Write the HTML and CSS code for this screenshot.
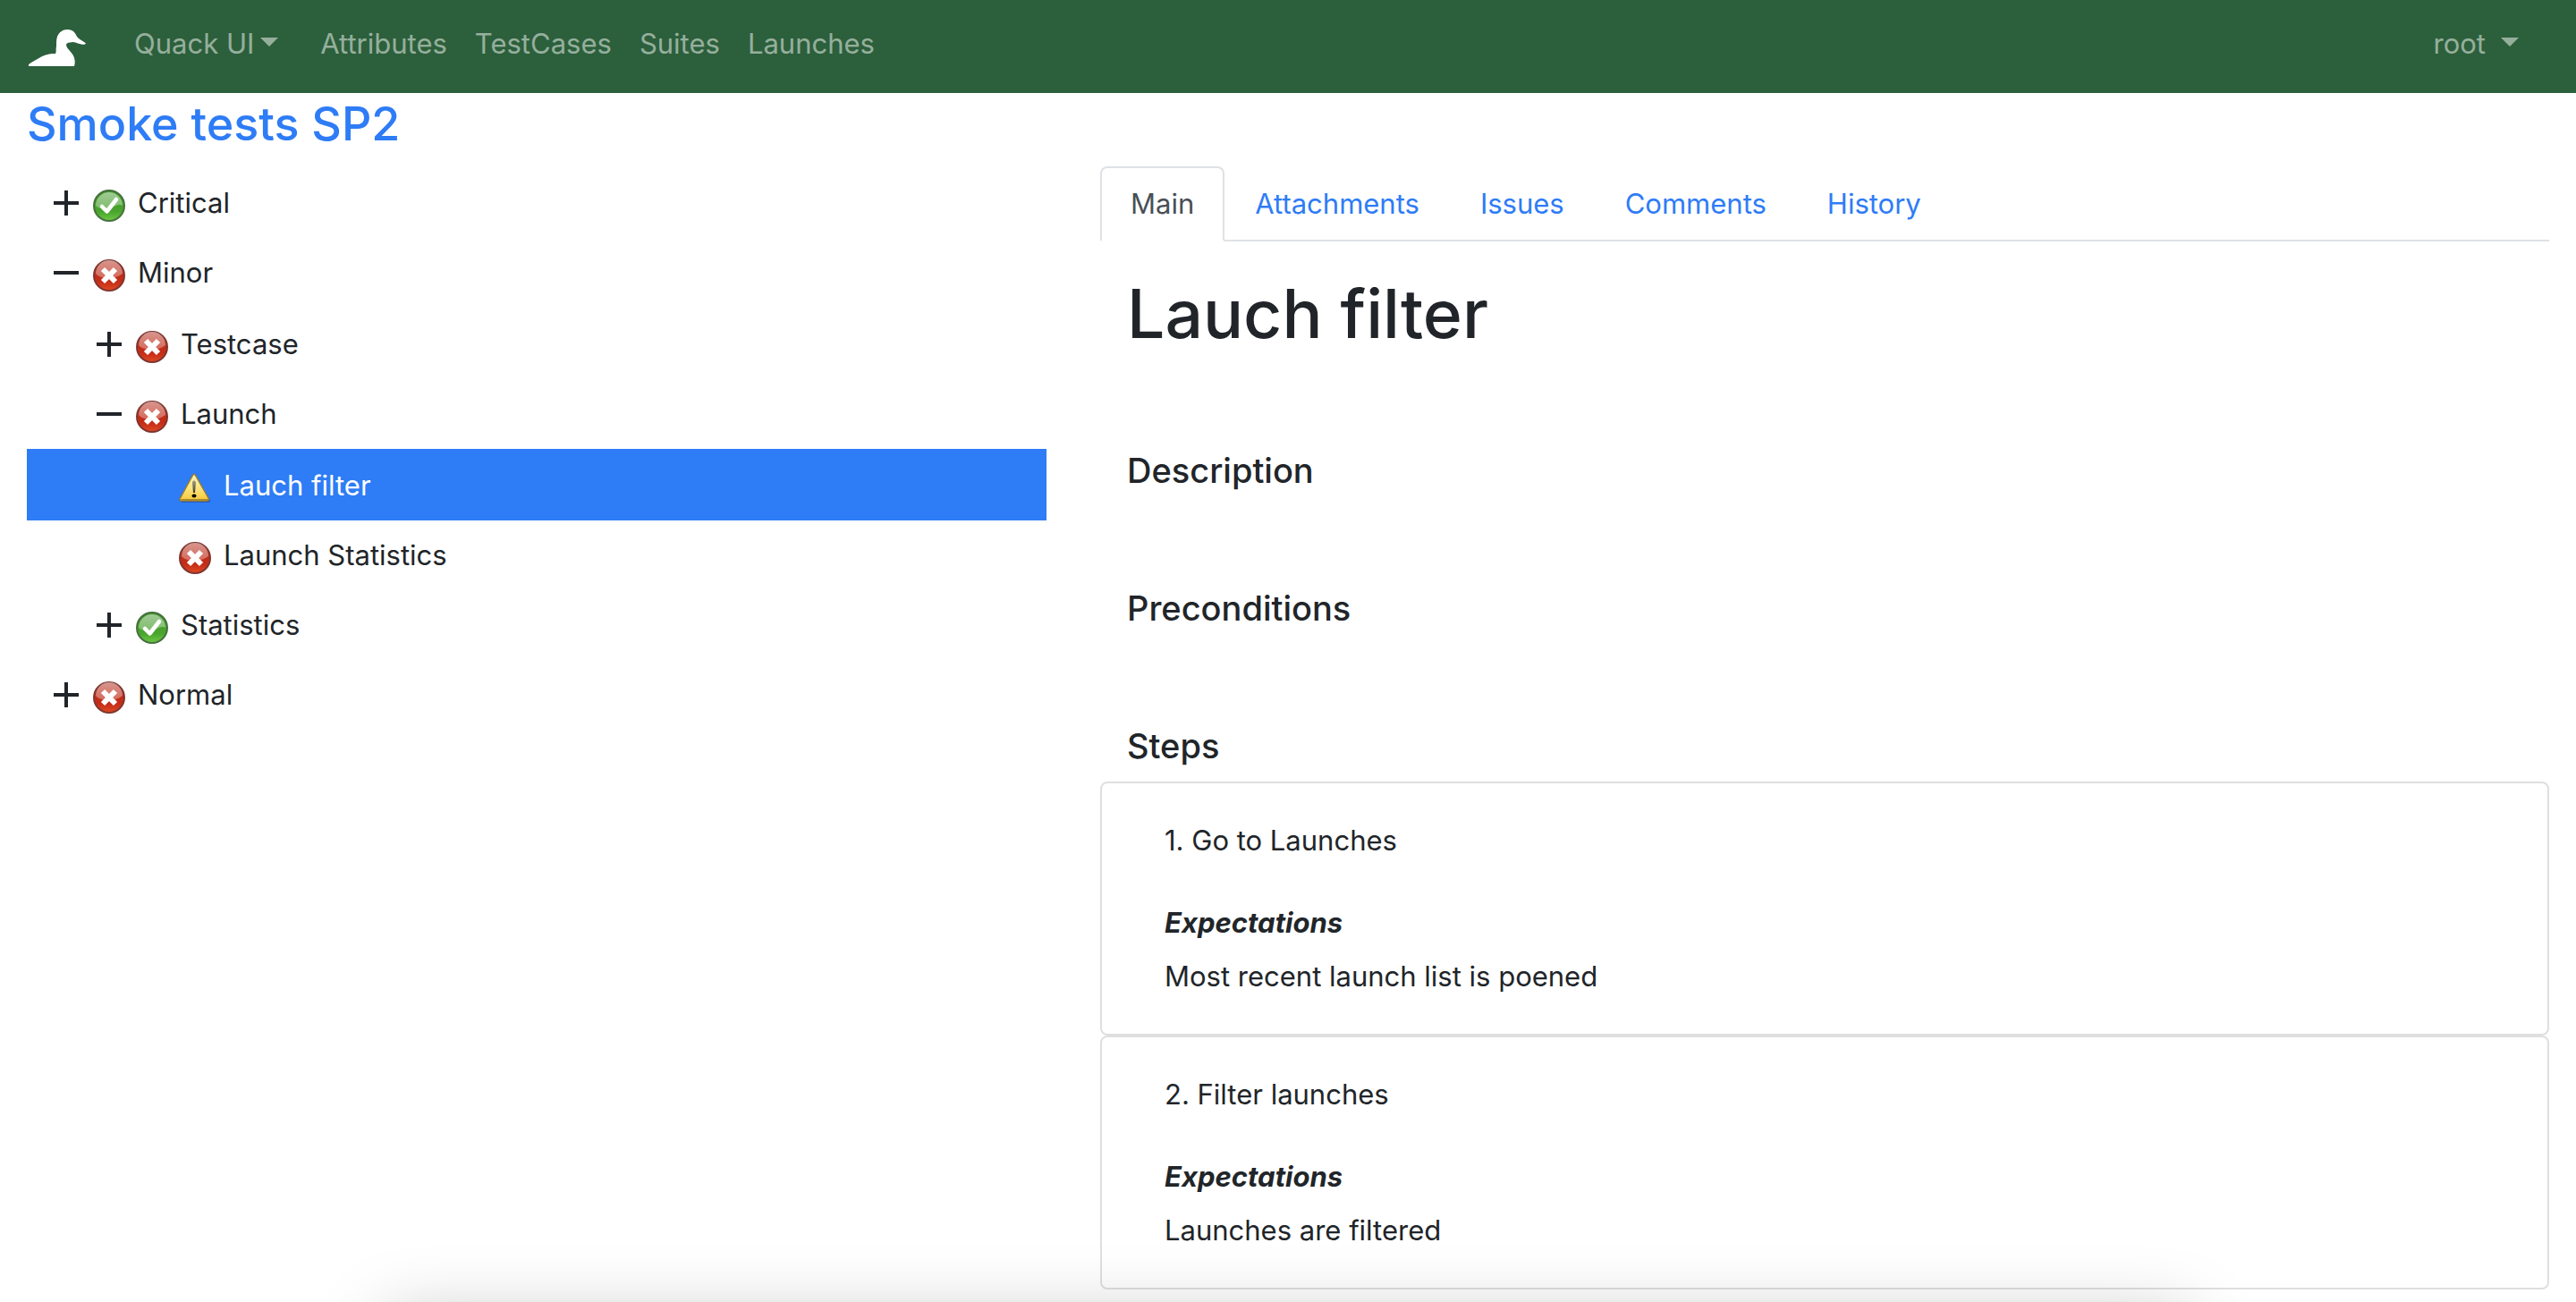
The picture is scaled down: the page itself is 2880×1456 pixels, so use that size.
FILE: index.html
```html
<!DOCTYPE html>
<html lang="en">
<head>
<meta charset="utf-8">
<meta name="viewport" content="width=device-width, initial-scale=1">
<title>Quack UI</title>
<link rel="stylesheet" href="styles.css">
</head>
<body>
<svg class="sprite" aria-hidden="true">
  <defs>
    <linearGradient id="green" x1="0" y1="0" x2="0" y2="1">
      <stop offset="0" stop-color="#3f9528"/><stop offset=".7" stop-color="#4aa52f"/><stop offset="1" stop-color="#6fc944"/>
    </linearGradient>
    <linearGradient id="red" x1="0" y1="0" x2="0" y2="1">
      <stop offset="0" stop-color="#b52a1a"/><stop offset=".7" stop-color="#c42d18"/><stop offset="1" stop-color="#e04a22"/>
    </linearGradient>
    <linearGradient id="gloss" x1="0" y1="0" x2="0" y2="1">
      <stop offset="0" stop-color="#fff" stop-opacity=".5"/><stop offset="1" stop-color="#fff" stop-opacity=".3"/>
    </linearGradient>
    <linearGradient id="yellow" x1="0" y1="0" x2="0" y2="1">
      <stop offset="0" stop-color="#fdf3b8"/><stop offset=".55" stop-color="#fbe27c"/><stop offset="1" stop-color="#f5c838"/>
    </linearGradient>
    <linearGradient id="mark" x1="0" y1="0" x2="0" y2="1">
      <stop offset="0" stop-color="#a39f85"/><stop offset="1" stop-color="#3c3a30"/>
    </linearGradient>
  </defs>
  <symbol id="passed" viewBox="0 0 36 36">
    <circle cx="18" cy="18" r="17" fill="url(#green)" stroke="#47703f" stroke-width="2"/>
    <path d="M3 18A15 15 0 0 1 33 18C28 15 23 20 18 21C12 22 6 21 3 18Z" fill="url(#gloss)"/>
    <path d="M10 19L15.500 24.500L26 11" fill="none" stroke="#fff" stroke-width="4.500" stroke-linecap="round" stroke-linejoin="round"/>
  </symbol>
  <symbol id="failed" viewBox="0 0 36 36">
    <circle cx="18" cy="18" r="17" fill="url(#red)" stroke="#803630" stroke-width="2"/>
    <path d="M3 16A15 15 0 0 1 33 16C28 20 22 21 18 21C12 21 6 20 3 16Z" fill="url(#gloss)"/>
    <path d="M11 11L25 25M25 11L11 25" stroke="#fff" stroke-width="6"/>
  </symbol>
  <symbol id="broken" viewBox="0 0 36 36">
    <path d="M18 4L35 32Q35 34 32 34H4Q2 34 3 32Z" fill="#1b3f7c" opacity=".45"/>
    <path d="M15.500 3.500Q17 1 18.500 3.500L33 29Q34 32 31 32H3Q0 32 1.500 29Z" fill="url(#yellow)" stroke="#9a7a2a" stroke-width="1.500" stroke-linejoin="round"/>
    <path d="M2.500 30.500H32" stroke="#a8862a" stroke-width="1"/>
    <path d="M15 11Q17 7.500 19 11L18 23H16Z" fill="url(#mark)"/>
    <ellipse cx="17" cy="26.500" rx="2.500" ry="2" fill="#000"/>
  </symbol>
  <symbol id="plus" viewBox="0 0 28 28"><path d="M0 14H28M14 0V28" stroke="currentColor" stroke-width="4"/></symbol>
  <symbol id="minus" viewBox="0 0 28 28"><path d="M0 14H28" stroke="currentColor" stroke-width="4"/></symbol>
</svg>

<header class="navbar">
  <a class="brand" href="#" aria-label="Quack home">
    <svg class="duck" viewBox="0 0 64 42" aria-hidden="true"><path fill="#fff" d="M0 41V39C4 36 10 33 15 30C20 27.500 26 27 30 27C31.500 24 30 22 31 19C31 14 31 11 32 8C34 3 38 0 43 0C48 0 51 2 53 6C55 11 60 12 64 15.500C63 17.500 59 16.500 57 16C54 15.500 52 14 49 14C46 15 43 14 42 17C42 22 51 26 51.500 34C52 37 51.500 39 51 41Z"/></svg>
  </a>
  <nav class="nav">
    <button class="nav-item nav-project" type="button">Quack UI<span class="caret"></span></button>
    <a class="nav-item" href="#">Attributes</a>
    <a class="nav-item" href="#">TestCases</a>
    <a class="nav-item" href="#">Suites</a>
    <a class="nav-item" href="#">Launches</a>
  </nav>
  <button class="nav-item nav-user" type="button">root<span class="caret"></span></button>
</header>

<main class="page">
  <h2 class="launch-title"><a href="#">Smoke tests SP2</a></h2>
  <div class="columns">
    <ul class="tree">
      <li>
        <div class="row"><button class="toggle" type="button" aria-label="Expand Critical"><svg><use href="#plus"/></svg></button><svg class="status"><use href="#passed"/></svg><span>Critical</span></div>
      </li>
      <li>
        <div class="row"><button class="toggle" type="button" aria-label="Collapse Minor"><svg><use href="#minus"/></svg></button><svg class="status"><use href="#failed"/></svg><span>Minor</span></div>
        <ul class="level-2">
          <li>
            <div class="row"><button class="toggle" type="button" aria-label="Expand Testcase"><svg><use href="#plus"/></svg></button><svg class="status"><use href="#failed"/></svg><span>Testcase</span></div>
          </li>
          <li>
            <div class="row"><button class="toggle" type="button" aria-label="Collapse Launch"><svg><use href="#minus"/></svg></button><svg class="status"><use href="#failed"/></svg><span>Launch</span></div>
            <ul class="level-3">
              <li><div class="row selected"><svg class="status"><use href="#broken"/></svg><span>Lauch filter</span></div></li>
              <li><div class="row"><svg class="status"><use href="#failed"/></svg><span>Launch Statistics</span></div></li>
            </ul>
          </li>
          <li>
            <div class="row"><button class="toggle" type="button" aria-label="Expand Statistics"><svg><use href="#plus"/></svg></button><svg class="status"><use href="#passed"/></svg><span>Statistics</span></div>
          </li>
        </ul>
      </li>
      <li>
        <div class="row"><button class="toggle" type="button" aria-label="Expand Normal"><svg><use href="#plus"/></svg></button><svg class="status"><use href="#failed"/></svg><span>Normal</span></div>
      </li>
    </ul>

    <section class="details">
      <nav class="tabs">
        <a class="tab active" href="#" aria-current="page">Main</a>
        <a class="tab" href="#">Attachments</a>
        <a class="tab" href="#">Issues</a>
        <a class="tab" href="#">Comments</a>
        <a class="tab" href="#">History</a>
      </nav>
      <h1 class="case-title">Lauch filter</h1>
      <section class="field"><h5>Description</h5></section>
      <section class="field"><h5>Preconditions</h5></section>
      <section class="steps">
        <h5>Steps</h5>
        <article class="card">
          <p class="step">1. Go to Launches</p>
          <h6>Expectations</h6>
          <p>Most recent launch list is poened</p>
        </article>
        <article class="card">
          <p class="step">2. Filter launches</p>
          <h6>Expectations</h6>
          <p>Launches are filtered</p>
        </article>
      </section>
    </section>
  </div>
</main>
<div class="bottom-shade"></div>
</body>
</html>
```

FILE: styles.css
```css
* {
  box-sizing: border-box;
}

body {
  margin: 0;
  background: #fff;
  color: #212529;
  font-family: Inter, "Liberation Sans", sans-serif;
  font-size: 31px;
  line-height: 48px;
}

h1, h2, h5, h6, p, ul {
  margin: 0;
  padding: 0;
}

ul {
  list-style: none;
}

a {
  color: #2e7cf6;
  text-decoration: none;
}

button {
  padding: 0;
  border: 0;
  background: none;
  color: inherit;
  font: inherit;
  cursor: pointer;
}

.sprite {
  position: absolute;
  width: 0;
  height: 0;
}

/* Top bar */
.navbar {
  display: flex;
  align-items: flex-start;
  min-height: 104px;
  padding: 25px 64px 0 32px;
  background: #2c5f3b;
}

.brand {
  display: block;
  margin: 8px 54px 0 0;
}

.duck {
  display: block;
  width: 64px;
  height: 42px;
}

.nav {
  display: flex;
  gap: 31px;
}

.nav-item {
  display: flex;
  color: rgba(255, 255, 255, 0.5);
}

.nav-project {
  gap: 7px;
  margin-right: 16px;
}

.nav-user {
  gap: 17px;
  margin-left: auto;
}

.caret {
  margin-top: 17px;
  border: 10px solid transparent;
  border-top-color: currentColor;
  border-bottom: 0;
  align-self: flex-start;
}

/* Launch page */
.page {
  padding: 0 30px;
}

.launch-title {
  margin-bottom: 12px;
  font-size: 52px;
  font-weight: 500;
  line-height: 70px;
}

.columns {
  display: grid;
  grid-template-columns: 5fr 7fr;
  margin: 0 -30px;
}

.tree,
.details {
  padding: 0 30px;
}

.tree {
  padding-top: 2px;
}

.row {
  display: flex;
  align-items: center;
  gap: 14px;
  min-height: 78px;
  padding-left: 30px;
}

.level-2 .row {
  padding-left: 78px;
}

.level-3 .row {
  padding-left: 170px;
}

.level-2 > li:first-child > .row,
.level-3 > li:first-child > .row {
  min-height: 80px;
  padding-top: 2px;
}

.selected {
  background: #2e7cf6;
  color: #fff;
}

.toggle,
.toggle svg {
  display: block;
  width: 28px;
  height: 28px;
}

.toggle {
  margin-right: 2px;
}

.status {
  width: 36px;
  height: 36px;
  margin-top: 6px;
}

/* Test case details */
.tabs {
  display: flex;
  border-bottom: 2px solid #dee2e6;
}

.tab {
  margin-bottom: -2px;
  padding: 16px 32px;
  border: 2px solid transparent;
  border-radius: 8px 8px 0 0;
}

.tab.active {
  border-color: #dee2e6 #dee2e6 #fff;
  background: #fff;
  color: #495057;
}

.case-title {
  padding: 32px 30px 102px;
  font-size: 75px;
  font-weight: 500;
  line-height: 98px;
}

h5 {
  padding: 0 30px;
  font-size: 38px;
  font-weight: 500;
}

.field {
  padding-bottom: 106px;
}

.steps h5 {
  margin-bottom: 16px;
}

.card {
  padding: 40px 70px;
  border: 2px solid #dfdfdf;
  border-radius: 8px;
}

.step {
  margin-bottom: 44px;
}

h6 {
  margin-bottom: 12px;
  font-size: 31px;
  font-style: italic;
  font-weight: 700;
}

/* Soft shade rising from the bottom edge of the window */
.bottom-shade {
  position: fixed;
  right: 15%;
  bottom: -220px;
  left: 15%;
  height: 200px;
  box-shadow: 0 0 80px rgba(0, 0, 0, 0.25);
  pointer-events: none;
}
```
